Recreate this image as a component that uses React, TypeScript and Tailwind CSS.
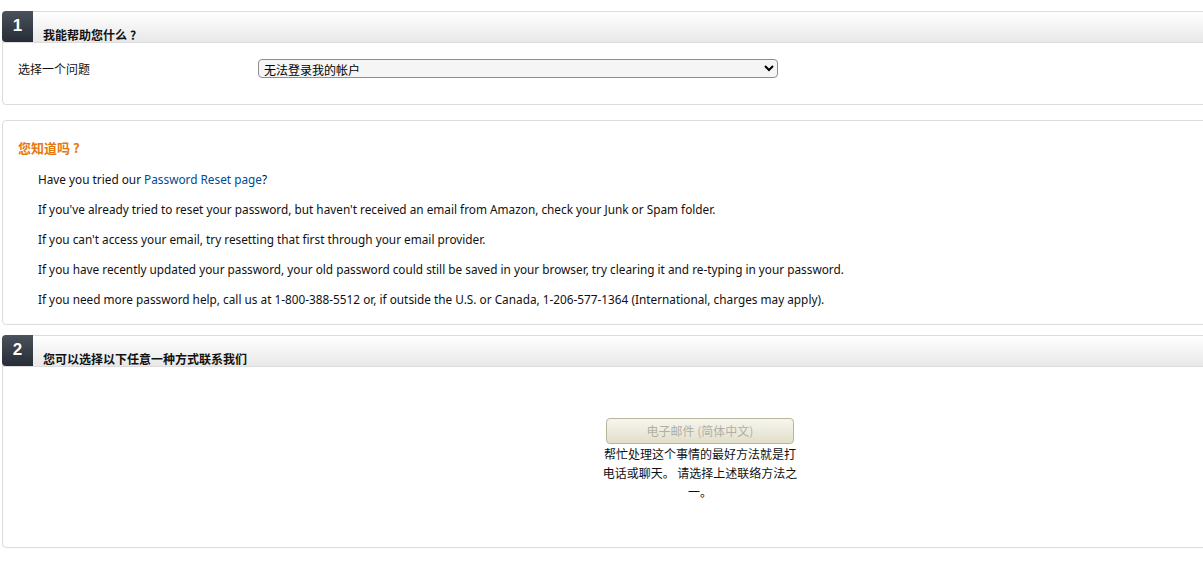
import React from "react";

const font = { fontFamily: '"Noto Sans", "Noto Sans CJK SC", sans-serif' };
const cjk = { fontFamily: '"Noto Sans CJK SC", sans-serif' };

function Q() {
  return <span className="ml-[3px]" style={{ fontFamily: '"Noto Sans CJK SC", sans-serif' }}>?</span>;
}

function Header({ n, title, q }: { n: string; title: string; q?: boolean }) {
  return (
    <div className="flex h-[31px] border-b border-[#dcdcdc] bg-gradient-to-b from-white to-[#e8e8e8]">
      <div className="-ml-px -mt-px flex h-[31px] w-[31px] items-center justify-center rounded-l-[4px] bg-gradient-to-b from-[#4b525b] to-[#262d36] pb-[2px] text-[17px] font-bold text-white" style={{ fontFamily: '"Liberation Sans", sans-serif' }}>
        {n}
      </div>
      <div className="ml-[10px] pt-[15px] text-[12px] font-bold leading-[16px] text-[#111]" style={cjk}>
        {title}
        {q && <Q />}
      </div>
    </div>
  );
}

export default function App() {
  const lines = [
    <>Have you tried our <span className="text-[#004b91]">Password Reset page</span>?</>,
    <>If you've already tried to reset your password, but haven't received an email from Amazon, check your Junk or Spam folder.</>,
    <>If you can't access your email, try resetting that first through your email provider.</>,
    <>If you have recently updated your password, your old password could still be saved in your browser, try clearing it and re-typing in your password.</>,
    <>If you need more password help, call us at 1-800-388-5512 or, if outside the U.S. or Canada, 1-206-577-1364 (International, charges may apply).</>,
  ];
  return (
    <div className="h-[575px] w-[1203px] overflow-hidden bg-white text-[#111]" style={font}>
      <div className="w-[1398px] pl-[2px] pt-[11px]">
        <div className="h-[94px] rounded-[4px] border border-[#dcdcdc]">
          <Header n="1" title="我能帮助您什么" q />
          <div className="flex items-center pl-[15px] pt-[15px] text-[12px]">
            <div className="w-[240px] pt-[2px]" style={cjk}>选择一个问题</div>
            <select className="h-[19px] w-[520px] rounded-[4px] border border-[#8e8e8e] bg-[#f5f5f5] px-[1px] text-[12px] text-black" style={cjk}>
              <option>无法登录我的帐户</option>
            </select>
          </div>
        </div>

        <div className="mt-[15px] h-[205px] rounded-[4px] border border-[#dcdcdc] pl-[15px] pt-[17px]">
          <div className="text-[13px] font-bold text-[#e47911]" style={cjk}>
            您知道吗<span className="ml-[3px]">?</span>
          </div>
          <div className="mt-[12px] flex flex-col gap-[12px] pl-[20px] text-[11.8px] leading-[18px] text-[#111]">
            {lines.map((l, i) => (
              <div key={i}>{l}</div>
            ))}
          </div>
        </div>

        <div className="mt-[10px] h-[213px] rounded-[4px] border border-[#dcdcdc]">
          <Header n="2" title="您可以选择以下任意一种方式联系我们" />
          <div className="flex flex-col items-center pt-[51px]">
            <button className="h-[26px] w-[188px] rounded-[4px] border border-[#b7b59a] bg-gradient-to-b from-[#f7f6ef] to-[#e1dfc8] text-[12px] text-[#b0afa6]" style={cjk}>
              电子邮件 (简体中文)
            </button>
            <div className="w-[200px] text-center text-[12px] leading-[19px] text-[#111]" style={cjk}>
              帮忙处理这个事情的最好方法就是打电话或聊天。 请选择上述联络方法之一。
            </div>
          </div>
        </div>
      </div>
    </div>
  );
}
